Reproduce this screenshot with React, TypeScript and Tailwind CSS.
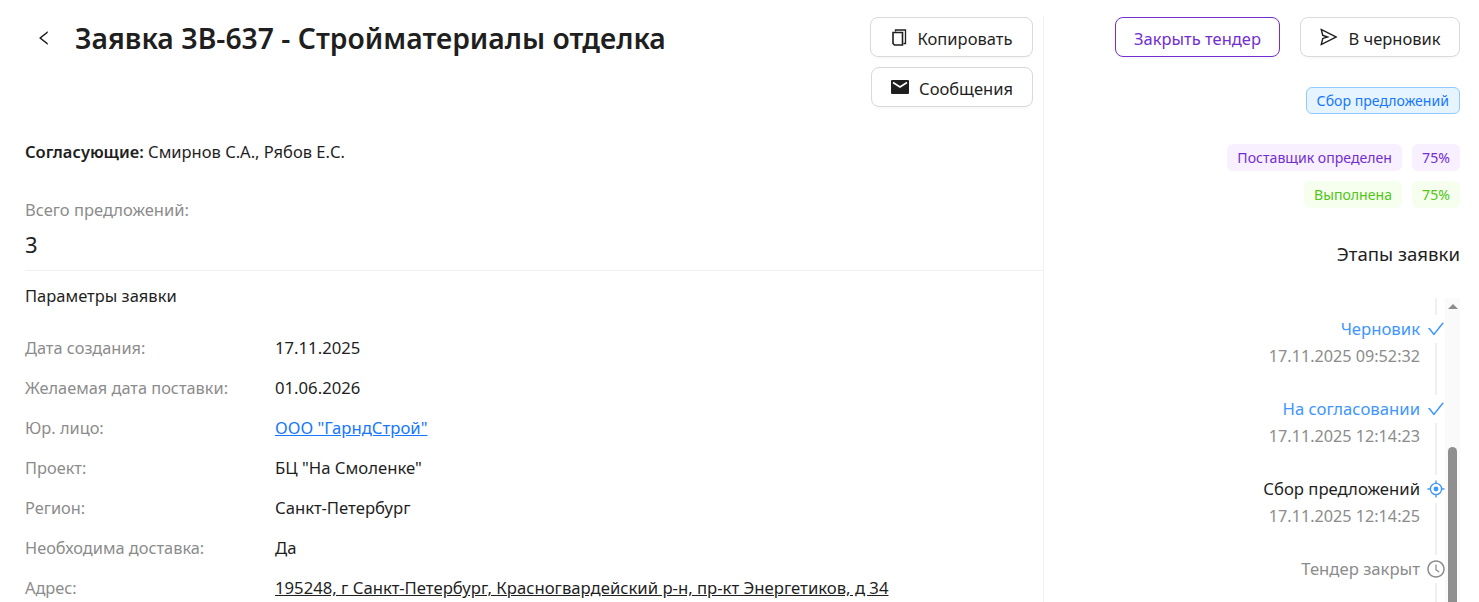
import React from 'react';
import { AiOutlineCheck, AiOutlineClockCircle, AiOutlineLeft, AiOutlineSend } from 'react-icons/ai';

const params = [
  { label: 'Дата создания:', value: '17.11.2025' },
  { label: 'Желаемая дата поставки:', value: '01.06.2026' },
  { label: 'Юр. лицо:', value: 'ООО "ГарндСтрой"', kind: 'link' },
  { label: 'Проект:', value: 'БЦ "На Смоленке"' },
  { label: 'Регион:', value: 'Санкт-Петербург' },
  { label: 'Необходима доставка:', value: 'Да' },
  { label: 'Адрес:', value: '195248, г Санкт-Петербург, Красногвардейский р-н, пр-кт Энергетиков, д 34', kind: 'address' }
];

const steps = [
  { title: 'Черновик', date: '17.11.2025 09:52:32', state: 'done' },
  { title: 'На согласовании', date: '17.11.2025 12:14:23', state: 'done' },
  { title: 'Сбор предложений', date: '17.11.2025 12:14:25', state: 'current' },
  { title: 'Тендер закрыт', date: '', state: 'pending' }
];

const CopyIcon = () => (
  <svg viewBox="0 0 16 17" className="h-[17px] w-4" fill="none" stroke="#1f1f1f">
    <path d="M4.5 2.5V1H14.5V14.5H12.5" strokeWidth="1.3" />
    <path d="M2 3.5H11.5V16H3.5L2 14.5Z" strokeWidth="1.6" />
  </svg>
);

const MailIcon = () => (
  <svg viewBox="0 0 18 14" className="h-[14px] w-[18px]">
    <rect width="18" height="14" rx="1" fill="#1f1f1f" />
    <path d="M2 2.5L9 7L16 2.5" fill="none" stroke="#fff" strokeWidth="1.6" />
  </svg>
);

const AimIcon = () => (
  <svg viewBox="0 0 18 18" className="h-[18px] w-[18px] shrink-0" fill="none" stroke="#4096ff">
    <circle cx="9" cy="9" r="5.6" strokeWidth="1.4" />
    <circle cx="9" cy="9" r="2.4" fill="#4096ff" stroke="none" />
    <path d="M9 0.5V3.4M9 14.6V17.5M0.5 9H3.4M14.6 9H17.5" strokeWidth="1.4" />
  </svg>
);

const StepIcon = ({ state }: { state: string }) => {
  if (state === 'done') return <AiOutlineCheck className="h-5 w-5 shrink-0 text-[#4096ff]" />;
  if (state === 'current') return <AimIcon />;
  return <AiOutlineClockCircle className="h-5 w-5 shrink-0 text-[#8c8c8c]" />;
};

export default function App() {
  return (
    <div className="flex h-[602px] w-[1479px] overflow-hidden bg-white font-['Noto_Sans','Open_Sans',sans-serif] text-[16.5px] text-[#1f1f1f]">
      <div className="mt-4 w-[1044px] shrink-0 border-r border-[#f0f0f0] pl-[25px]">
        <div className="flex items-start justify-between pr-[10px] pt-[1px]">
          <div className="flex items-center">
            <AiOutlineLeft className="ml-[10px] h-[18px] w-[18px] text-[#1f1f1f]" />
            <h1 className="ml-[22px] text-[28.3px] font-semibold leading-[42px]">Заявка ЗВ-637 - Стройматериалы отделка</h1>
          </div>
          <div className="flex flex-col items-end gap-[10px]">
            <button className="flex h-10 w-[163px] items-center justify-center gap-[11px] rounded-lg border border-[#d9d9d9] shadow-[0_2px_0_rgba(0,0,0,0.02)]">
              <CopyIcon />
              <span className="pt-1">Копировать</span>
            </button>
            <button className="flex h-10 w-[162px] items-center justify-center gap-[10px] rounded-lg border border-[#d9d9d9] shadow-[0_2px_0_rgba(0,0,0,0.02)]">
              <MailIcon />
              <span className="pt-1">Сообщения</span>
            </button>
          </div>
        </div>
        <p className="mt-[33px] leading-6">
          <span className="font-semibold">Согласующие:</span> Смирнов С.А., Рябов Е.С.
        </p>
        <p className="mt-[34px] leading-6 text-[#8c8c8c]">Всего предложений:</p>
        <p className="mt-2 text-[22px] leading-7">3</p>
        <div className="mt-3 border-t border-[#f0f0f0]" />
        <p className="mt-[13px] leading-6">Параметры заявки</p>
        <div className="mt-5 flex flex-col">
          {params.map((row) => (
            <div key={row.label} className="flex h-10 items-center">
              <span className="w-[250px] shrink-0 text-[16.35px] text-[#8c8c8c]">{row.label}</span>
              <span
                className={`text-[16.7px] ${
                  row.kind === 'link'
                    ? 'text-[#1677ff] underline'
                    : row.kind === 'address'
                      ? 'underline'
                      : ''
                }`}
              >
                {row.value}
              </span>
            </div>
          ))}
        </div>
      </div>

      <div className="flex min-w-0 flex-1 flex-col items-end pr-[19px] pt-[17px]">
        <div className="flex shrink-0 gap-5">
          <button className="flex h-10 w-[165px] items-center justify-center rounded-lg border border-[#722ed1] pt-1 text-[#722ed1] shadow-[0_2px_0_rgba(0,0,0,0.02)]">
            Закрыть тендер
          </button>
          <button className="flex h-10 w-[160px] items-center justify-center gap-[9px] rounded-lg border border-[#d9d9d9] shadow-[0_2px_0_rgba(0,0,0,0.02)]">
            <AiOutlineSend className="h-5 w-5" />
            <span className="pt-1">В черновик</span>
          </button>
        </div>
        <span className="mt-[30px] flex h-[27px] shrink-0 items-center rounded-md border border-[#91caff] bg-[#e6f4ff] px-[10px] text-[14.1px] text-[#1677ff]">Сбор предложений</span>
        <div className="mt-[30px] flex shrink-0 gap-[10px]">
          <span className="flex h-[27px] items-center rounded-md bg-[#f9f0ff] px-[10px] text-[14.1px] text-[#722ed1]">Поставщик определен</span>
          <span className="flex h-[27px] w-12 items-center justify-center rounded-md bg-[#f9f0ff] text-[14.1px] text-[#722ed1]">75%</span>
        </div>
        <div className="mt-[10px] flex shrink-0 gap-[10px]">
          <span className="flex h-[27px] items-center rounded-md bg-[#f6ffed] px-[10px] text-[14.1px] text-[#52c41a]">Выполнена</span>
          <span className="flex h-[27px] w-12 items-center justify-center rounded-md bg-[#f6ffed] text-[14.1px] text-[#52c41a]">75%</span>
        </div>
        <h2 className="mt-[32px] shrink-0 text-[18.6px] leading-7">Этапы заявки</h2>

        <div className="mt-[30px] flex shrink-0">
          <div className="flex flex-col items-end">
            <div className="mr-[7px] h-[17px] w-[2px] bg-[#f0f0f0]" />
            {steps.map((step) => (
              <div key={step.title} className="flex h-20 justify-end gap-2">
                <div className="flex flex-col items-end">
                  <span
                    className={`text-[16.7px] leading-7 ${
                      step.state === 'done'
                        ? 'text-[#4096ff]'
                        : step.state === 'current'
                          ? 'text-[#1f1f1f]'
                          : 'text-[#8c8c8c]'
                    }`}
                  >
                    {step.title}
                  </span>
                  <span className="text-[16.2px] leading-[26px] text-[#8c8c8c]">{step.date}</span>
                </div>
                <div className="flex w-4 flex-col items-center">
                  <div className="flex h-7 items-center justify-center">
                    <StepIcon state={step.state} />
                  </div>
                  <div className="h-[52px] w-[2px] bg-[#f0f0f0]" />
                </div>
              </div>
            ))}
          </div>
          <div className="ml-[1px] flex w-[15px] flex-col items-center bg-[#fafafa]">
            <div className="mt-[6px] h-0 w-0 border-x-[5px] border-b-[5px] border-x-transparent border-b-[#8c8c8c]" />
            <div className="mt-[138px] h-[300px] w-[9px] rounded-t-full bg-[#8f8f8f]" />
          </div>
        </div>
      </div>
    </div>
  );
}
